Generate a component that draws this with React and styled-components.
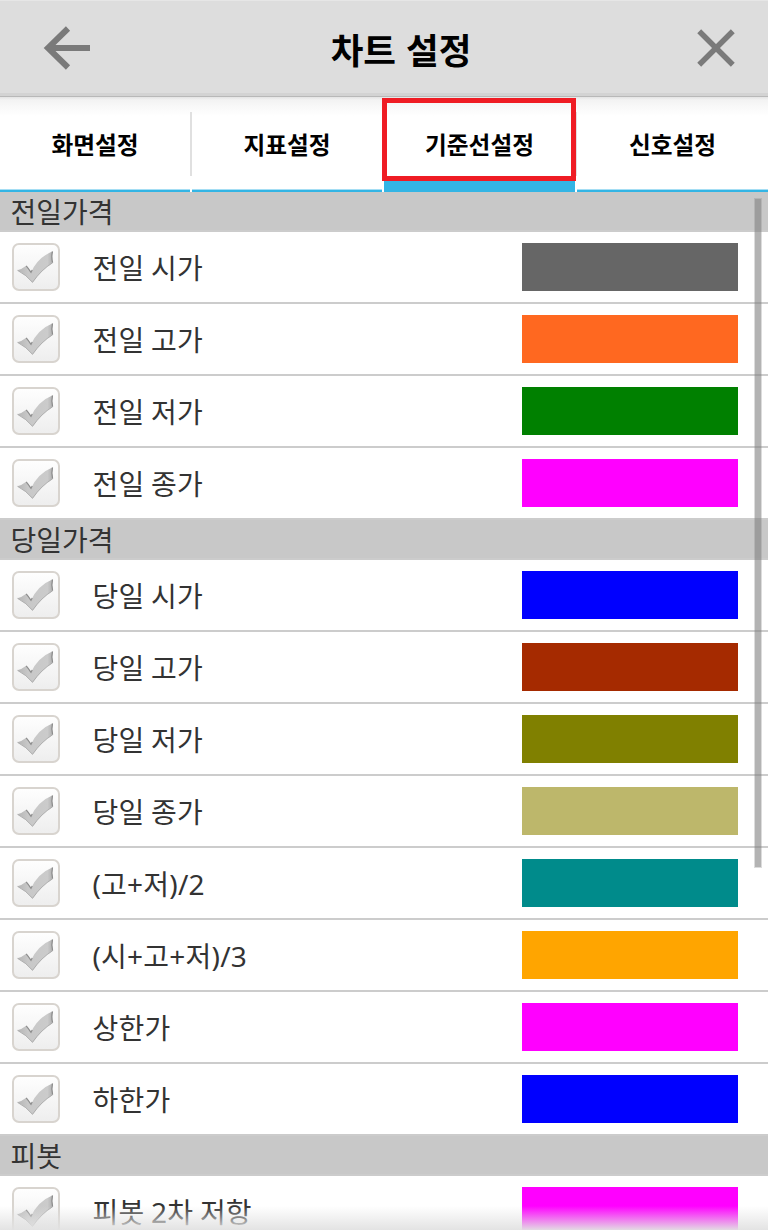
import React, { useState } from "react";
import styled, { createGlobalStyle } from "styled-components";

const GlobalStyle = createGlobalStyle`
  *, *::before, *::after {
    box-sizing: border-box;
  }
  body {
    margin: 0;
    background: #fff;
    font-family: "Noto Sans CJK KR", "Noto Sans", sans-serif;
  }
  button {
    border: 0;
    padding: 0;
    background: none;
    font: inherit;
    color: inherit;
    cursor: pointer;
  }
`;

const tabs = ["화면설정", "지표설정", "기준선설정", "신호설정"];

const sections = [
  {
    title: "전일가격",
    items: [
      { label: "전일 시가", color: "#666666" },
      { label: "전일 고가", color: "#ff6820" },
      { label: "전일 저가", color: "#008000" },
      { label: "전일 종가", color: "#ff00ff" },
    ],
  },
  {
    title: "당일가격",
    items: [
      { label: "당일 시가", color: "#0000ff" },
      { label: "당일 고가", color: "#a52a00" },
      { label: "당일 저가", color: "#808000" },
      { label: "당일 종가", color: "#bdb76b" },
      { label: "(고+저)/2", color: "#008b8b" },
      { label: "(시+고+저)/3", color: "#ffa500" },
      { label: "상한가", color: "#ff00ff" },
      { label: "하한가", color: "#0000ff" },
    ],
  },
  {
    title: "피봇",
    items: [{ label: "피봇 2차 저항", color: "#ff00ff" }],
  },
];

const Screen = styled.div`
  position: relative;
  display: flex;
  flex-direction: column;
  width: 768px;
  height: 1230px;
  overflow: hidden;
`;

const TopBar = styled.header`
  flex: none;
  display: grid;
  grid-template-columns: 134px 1fr 104px;
  align-items: center;
  height: 97px;
  padding-bottom: 2px;
  border-top: 1px solid #e6e6e6;
  border-bottom: 1px solid #b8b8b8;
  background: linear-gradient(#dddddd 92px, #d3d3d3 92px);
`;

const IconButton = styled.button`
  display: flex;
  justify-content: center;
  align-items: center;
  height: 93px;
`;

const Title = styled.h1`
  margin: 0;
  padding: 2px 0 0 4px;
  font-size: 35.5px;
  line-height: 52px;
  word-spacing: 2px;
  font-weight: 700;
  text-align: center;
  color: #000;
`;

const TabBar = styled.nav`
  flex: none;
  display: grid;
  grid-template-columns: 192px 192px 193px 191px;
  height: 95px;
  background: linear-gradient(#e4e4e4 0, #f3f3f3 3px, #f8f8f8 9px, #fff 19px);
`;

const Tab = styled.button`
  position: relative;
  display: flex;
  flex-direction: column;
  padding-top: 15px;
  font-size: 23.7px;
  line-height: 65px;
  font-weight: 700;
  color: #000;
`;

const TabText = styled.span`
  width: 100%;
  height: 64px;
  text-align: center;
  border-right: ${({ $last }) => ($last ? "0" : "2px solid #e0e0e0")};
`;

const TabLine = styled.span`
  width: calc(100% - ${({ $last }) => ($last ? 0 : 2)}px);
  height: ${({ $active }) => ($active ? 12 : 3)}px;
  margin-top: auto;
  background: #33b5e5;
  border-top: ${({ $active }) => ($active ? "0" : "1px solid #a5def4")};
`;

const ActiveFrame = styled.span`
  position: absolute;
  top: 1px;
  left: -2px;
  width: 194px;
  height: 83px;
  border: 5px solid #ef1c24;
`;

const List = styled.main`
  flex: 1;
  min-height: 0;
  overflow: hidden;
`;

const SectionHeader = styled.h2`
  height: 40px;
  margin: 0;
  padding-left: 10.5px;
  border-bottom: 2px solid #cccccc;
  background: #c8c8c8;
  font-size: 28px;
  line-height: 38px;
  font-weight: 400;
  color: #333;
`;

const Row = styled.div`
  display: flex;
  align-items: center;
  height: 72px;
  padding: 0 30px 0 12px;
  border-bottom: 2px solid #cccccc;
  background: #fff;
`;

const CheckBox = styled.button`
  width: 48px;
  height: 48px;
  border: 2px solid #d8d4cf;
  border-radius: 7px;
  background: linear-gradient(#fefefe, #eeeeee);

  svg {
    display: block;
  }
`;

const Label = styled.span`
  flex: 1;
  padding: 1px 0 0 32.5px;
  font-family: "Noto Sans", "Noto Sans CJK KR", sans-serif;
  font-size: 28px;
  line-height: 36px;
  letter-spacing: 0.22px;
  word-spacing: -0.9px;
  color: #333;
`;

const Swatch = styled.button`
  width: 216px;
  height: 48px;
  background: ${({ $color }) => $color};
`;

const ScrollThumb = styled.div`
  position: absolute;
  top: 198px;
  right: 6px;
  width: 8px;
  height: 670px;
  border: 1px solid rgba(128, 128, 128, 0.28);
  background: rgba(128, 128, 128, 0.6);
  background-clip: padding-box;
`;

const BottomFade = styled.div`
  position: absolute;
  left: 0;
  right: 0;
  bottom: 0;
  height: 24px;
  background: linear-gradient(rgba(226, 226, 226, 0), rgba(226, 226, 226, 0.97));
  pointer-events: none;
`;

const BackIcon = () => (
  <svg width="48" height="48" viewBox="0 0 48 48" fill="none" stroke="#7a7a7a" strokeWidth="6">
    <path d="M25 4.5 5 24l20 19.5M5 24h42" />
  </svg>
);

const CloseIcon = () => (
  <svg width="40" height="40" viewBox="0 0 40 40" fill="none" stroke="#7a7a7a" strokeWidth="5.5">
    <path d="M3.2 3.2l33.6 33.6M36.8 3.2l-33.6 33.6" />
  </svg>
);

const CheckIcon = () => (
  <svg width="44" height="44" viewBox="0 0 44 44">
    <defs>
      <linearGradient id="check" x1="0" y1="0" x2="1" y2="0">
        <stop offset="0" stopColor="#b4b4b4" />
        <stop offset="0.3" stopColor="#c8c8c8" />
        <stop offset="0.85" stopColor="#cbcbcb" />
        <stop offset="1" stopColor="#b0b0b0" />
      </linearGradient>
    </defs>
    <path
      d="M3.3 25.3Q8 24 12.2 20.7Q14 23 17 27.5Q23.5 12.5 38.7 6.2Q37.3 12 38.8 17.8Q27.5 24.5 18.5 37.7Q12.5 30 3.3 25.3Z"
      fill="url(#check)"
    />
    <path d="M12.2 20.9Q14 23 17 27.3L18.2 25M38.5 6.5Q37.2 12 38.6 17.6" fill="none" stroke="#8c8c8c" strokeWidth="1.2" />
    <path d="M38.6 17.8Q27.5 24.5 18.5 37.3Q12.5 30 3.6 25.4" fill="none" stroke="#a8a8a8" strokeWidth="0.9" />
  </svg>
);

const SettingRow = ({ label, color }) => {
  const [checked, setChecked] = useState(true);

  return (
    <Row>
      <CheckBox role="checkbox" aria-checked={checked} onClick={() => setChecked(!checked)}>
        {checked && <CheckIcon />}
      </CheckBox>
      <Label>{label}</Label>
      <Swatch $color={color} />
    </Row>
  );
};

const App = () => {
  const [active, setActive] = useState(2);

  return (
    <>
      <GlobalStyle />
      <Screen>
        <TopBar>
          <IconButton><BackIcon /></IconButton>
          <Title>차트 설정</Title>
          <IconButton><CloseIcon /></IconButton>
        </TopBar>
        <TabBar>
          {tabs.map((tab, id) => {
            const last = id === tabs.length - 1;
            return (
              <Tab key={tab} onClick={() => setActive(id)}>
                <TabText $last={last}>{tab}</TabText>
                <TabLine $active={id === active} $last={last} />
                {id === active && <ActiveFrame />}
              </Tab>
            );
          })}
        </TabBar>
        <List>
          {sections.map((section) => (
            <section key={section.title}>
              <SectionHeader>{section.title}</SectionHeader>
              {section.items.map((item) => (
                <SettingRow key={item.label} {...item} />
              ))}
            </section>
          ))}
        </List>
        <ScrollThumb />
        <BottomFade />
      </Screen>
    </>
  );
};

export default App;
